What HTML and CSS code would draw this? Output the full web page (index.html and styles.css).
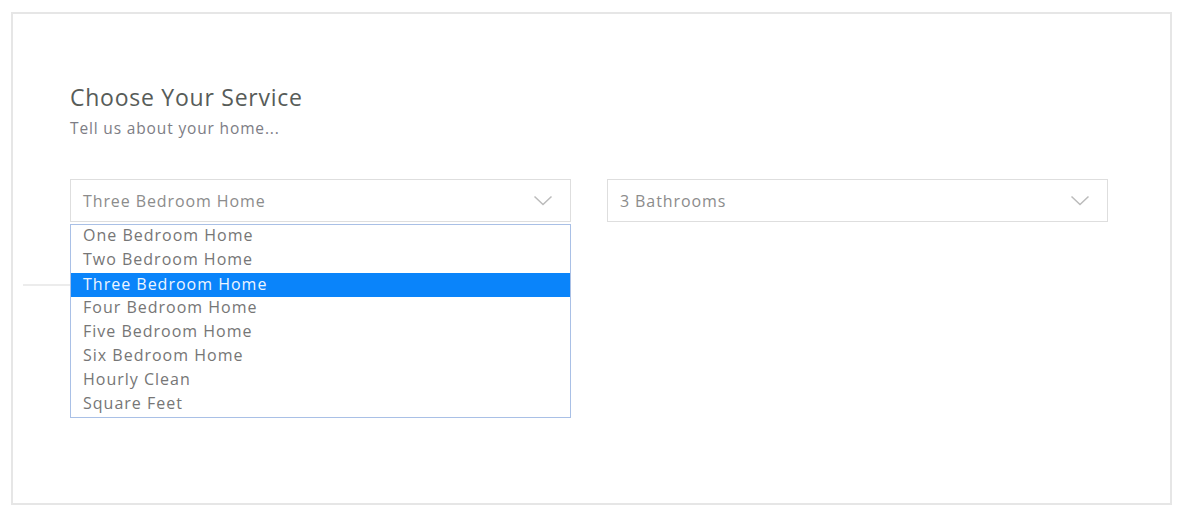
FILE: index.html
```html
<!DOCTYPE html>
<html>
<head>
<meta charset="utf-8">
<link rel="stylesheet" href="styles.css">
</head>
<body>
<div class="card">
  <h1 class="title">Choose Your Service</h1>
  <p class="subtitle">Tell us about your home...</p>
  <div class="row">
    <div class="field">
      <div class="select">
        <span class="value">Three Bedroom Home</span>
        <svg class="chev" width="20" height="12" viewBox="0 0 20 12"><path d="M1.5 1.5 L10 9.5 L18.5 1.5" fill="none" stroke="#bbbbbb" stroke-width="1.5"/></svg>
      </div>
      <ul class="menu">
        <li>One Bedroom Home</li>
        <li>Two Bedroom Home</li>
        <li class="active">Three Bedroom Home</li>
        <li>Four Bedroom Home</li>
        <li>Five Bedroom Home</li>
        <li>Six Bedroom Home</li>
        <li>Hourly Clean</li>
        <li>Square Feet</li>
      </ul>
    </div>
    <div class="field">
      <div class="select">
        <span class="value">3 Bathrooms</span>
        <svg class="chev" width="20" height="12" viewBox="0 0 20 12"><path d="M1.5 1.5 L10 9.5 L18.5 1.5" fill="none" stroke="#bbbbbb" stroke-width="1.5"/></svg>
      </div>
    </div>
  </div>
  <div class="divider"></div>
</div>
</body>
</html>
```
FILE: styles.css
```css
* { box-sizing: border-box; }
body {
  margin: 0;
  background: #fff;
  font-family: "Open Sans", "Liberation Sans", sans-serif;
}
.card {
  margin: 12px 0 0 11px;
  width: 1161px;
  height: 493px;
  border: 2px solid #e6e6e6;
  padding: 68px 0 0 57px;
}
.title {
  margin: 0;
  font-size: 23px;
  line-height: 30px;
  font-weight: 400;
  letter-spacing: 0.75px;
  color: #575c59;
}
.subtitle {
  margin: 5px 0 0;
  font-size: 15.5px;
  line-height: 22px;
  letter-spacing: 0.85px;
  color: #7d7d85;
}
.row {
  display: flex;
  gap: 36px;
  margin-top: 40px;
}
.field {
  position: relative;
  width: 501px;
}
.select {
  height: 43px;
  border: 1px solid #dedede;
  display: flex;
  align-items: center;
  justify-content: space-between;
  padding: 0 17px 0 12px;
}
.value {
  font-size: 16px;
  letter-spacing: 0.9px;
  color: #8c8c8c;
}
.chev { display: block; }
.menu {
  position: absolute;
  top: 45px;
  left: 0;
  width: 501px;
  margin: 0;
  padding: 0;
  list-style: none;
  background: #fff;
  border: 1px solid #a9c0e6;
  z-index: 2;
}
.menu li {
  height: 24px;
  line-height: 20px;
  padding-left: 12px;
  font-size: 16px;
  letter-spacing: 1px;
  color: #767676;
}
.menu li.active {
  background: #0a84fa;
  color: #eef5ff;
  line-height: 22px;
}
.divider {
  margin: 62px 0 0 -47px;
  width: 300px;
  height: 2px;
  background: #ececec;
}
```
